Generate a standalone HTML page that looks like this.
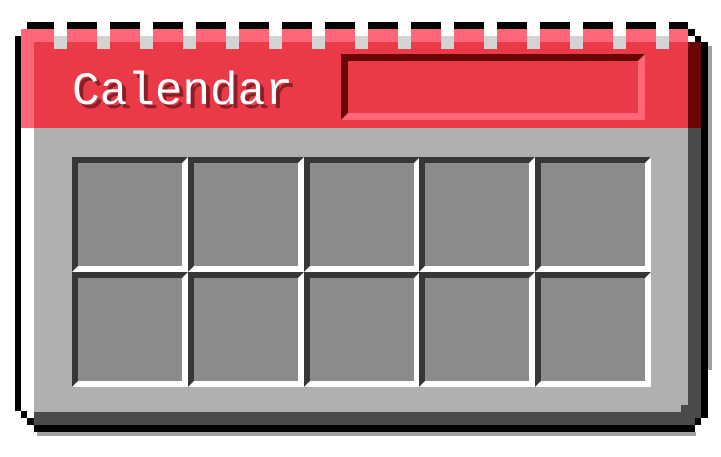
<!DOCTYPE html>
<html><head><meta charset="utf-8"><style>
html,body{margin:0;padding:0;background:#fff;width:721px;height:457px;overflow:hidden;position:relative}
div{position:absolute;box-sizing:border-box}
.s{width:116px;height:115px;background:#8b8b8b;border-top:6px solid #373737;border-left:6px solid #373737;border-bottom:6px solid #fff;border-right:6px solid #fff}
.t{width:13px;height:30px;top:19px;background:linear-gradient(#fff 0 17px,#d3d3d3 17px)}
</style></head><body>
<!-- shadows -->
<div style="left:708px;top:46px;width:4px;height:324px;background:#a0a0a0"></div>
<div style="left:37px;top:432px;width:659px;height:4px;background:#a0a0a0"></div>
<!-- black outline -->
<div style="left:27px;top:22px;width:661px;height:7px;background:#000"></div>
<div style="left:15px;top:36px;width:6px;height:375px;background:#000"></div>
<div style="left:21px;top:29px;width:6px;height:7px;background:#000"></div>
<div style="left:688px;top:29px;width:7px;height:7px;background:#000"></div>
<div style="left:695px;top:36px;width:6px;height:6px;background:#000"></div>
<div style="left:701px;top:42px;width:7px;height:376px;background:#000"></div>
<div style="left:34px;top:425px;width:661px;height:7px;background:#000"></div>
<div style="left:21px;top:411px;width:6px;height:7px;background:#000"></div>
<div style="left:27px;top:418px;width:7px;height:7px;background:#000"></div>
<div style="left:695px;top:418px;width:6px;height:7px;background:#000"></div>
<!-- header -->
<div style="left:21px;top:29px;width:667px;height:99px;background:#ff6677"></div>
<div style="left:34px;top:42px;width:654px;height:86px;background:#ea3947"></div>
<div style="left:688px;top:42px;width:13px;height:86px;background:#6b0608"></div>
<!-- body -->
<div style="left:21px;top:128px;width:13px;height:283px;background:#fff"></div>
<div style="left:34px;top:128px;width:654px;height:284px;background:#b0b0b0"></div>
<div style="left:688px;top:128px;width:13px;height:290px;background:#4a4a4a"></div>
<div style="left:34px;top:412px;width:661px;height:13px;background:#4a4a4a"></div>
<div style="left:681px;top:405px;width:7px;height:7px;background:#4a4a4a"></div>
<!-- tabs -->
<div class="t" style="left:54px"></div><div class="t" style="left:97px"></div><div class="t" style="left:140px"></div><div class="t" style="left:183px"></div><div class="t" style="left:226px"></div><div class="t" style="left:269px"></div><div class="t" style="left:312px"></div><div class="t" style="left:355px"></div><div class="t" style="left:398px"></div><div class="t" style="left:441px"></div><div class="t" style="left:484px"></div><div class="t" style="left:527px"></div><div class="t" style="left:570px"></div><div class="t" style="left:613px"></div><div class="t" style="left:656px"></div>
<!-- title -->
<div style="left:72px;top:67px;font:46px/50px 'Liberation Mono',monospace;color:#fff;text-shadow:4px 4px 0 #8a1f28;white-space:nowrap">Calendar</div>
<!-- textbox -->
<div style="left:341px;top:54px;width:304px;height:66px;background:#ea3947;border-top:7px solid #6b0608;border-left:7px solid #6b0608;border-bottom:7px solid #ff6677;border-right:7px solid #ff6677"></div>
<!-- slots -->
<div class="s" style="left:72px;top:157px"></div><div class="s" style="left:188px;top:157px"></div><div class="s" style="left:304px;top:157px"></div><div class="s" style="left:419px;top:157px"></div><div class="s" style="left:535px;top:157px"></div>
<div class="s" style="left:72px;top:272px"></div><div class="s" style="left:188px;top:272px"></div><div class="s" style="left:304px;top:272px"></div><div class="s" style="left:419px;top:272px"></div><div class="s" style="left:535px;top:272px"></div>
</body></html>
